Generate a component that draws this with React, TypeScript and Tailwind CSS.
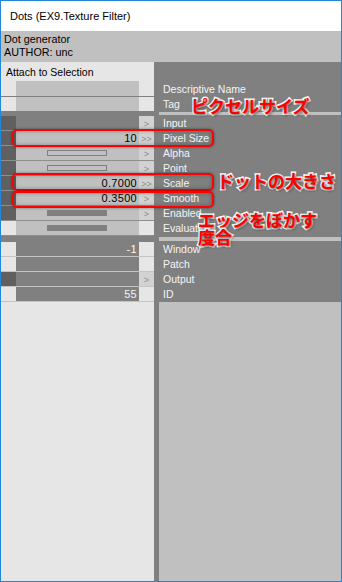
import React from 'react';

type Row = {
  label: string;
  leftDark?: boolean;
  midDark?: boolean;
  value?: string;
  valueColor?: string;
  bar?: 'hollow' | 'solid';
  arrow?: string;
  arrowBg?: string;
};

const mainRows: Row[] = [
  { label: 'Input', leftDark: true, midDark: true, arrow: '>' },
  { label: 'Pixel Size', leftDark: true, value: '10', arrow: '>>' },
  { label: 'Alpha', leftDark: true, bar: 'hollow', arrow: '>' },
  { label: 'Point', leftDark: true, bar: 'hollow', arrow: '>' },
  { label: 'Scale', leftDark: true, value: '0.7000', arrow: '>>' },
  { label: 'Smooth', leftDark: true, value: '0.3500', arrow: '>' },
  { label: 'Enabled', leftDark: true, bar: 'solid', arrow: '>' },
  { label: 'Evaluate', bar: 'solid', arrow: '', arrowBg: 'bg-[#e6e6e6]' },
];

const outRows: Row[] = [
  { label: 'Window', midDark: true, value: '-1', valueColor: 'text-[#ffffd8]' },
  { label: 'Patch', midDark: true },
  { label: 'Output', leftDark: true, midDark: true, arrow: '>' },
  { label: 'ID', midDark: true, value: '55', valueColor: 'text-[#f4f4f4]' },
];

const PinRow = ({ row, line }: { row: Row; line: string }) => (
  <div className="flex h-[15px]">
    <div className={`w-[15px] border-b ${line} ${row.leftDark ? 'bg-[#606060]' : 'bg-[#e6e6e6]'}`} />
    <div
      className={`w-[123px] border-b ${line} flex items-center justify-end pr-[2px] ${
        row.midDark ? 'bg-[#808080]' : 'bg-[#c0c0c0]'
      }`}
    >
      {row.bar && (
        <div
          className={`mx-auto h-[6px] w-[60px] ${
            row.bar === 'hollow' ? 'border border-[#808080]' : 'bg-[#808080]'
          }`}
        />
      )}
      {row.value && (
        <span className={`text-[11px] leading-none tracking-[0.3px] ${row.valueColor ?? 'text-black'}`}>{row.value}</span>
      )}
    </div>
    <div
      className={`w-[15px] border-b ${line} flex items-center justify-center pt-[2px] text-[9px] leading-none text-[#8c8c8c] ${
        row.arrowBg ?? (row.arrow ? 'bg-[#d2d2d2]' : 'bg-[#e6e6e6]')
      }`}
    >
      {row.arrow}
    </div>
    <div className="w-[5px] bg-[#808080]" />
    <div className="flex-1 bg-[#808080] pl-[4px] flex items-center text-[10.5px] leading-none text-[#f4f4f4]">
      {row.label}
    </div>
  </div>
);

const redBox =
  'absolute left-[11px] w-[202px] rounded-[5px] border-2 border-[#ff0000] shadow-[0_0_3px_rgba(0,0,0,0.45),inset_0_0_4px_rgba(0,0,0,0.3)]';

const note =
  "absolute text-[17px] font-bold leading-none text-[#ff0000] whitespace-nowrap [-webkit-text-stroke:3px_white] [paint-order:stroke_fill] [text-shadow:1px_1px_3px_rgba(0,0,0,0.8)] [font-family:'Noto_Sans_CJK_JP',sans-serif]";

export default function App() {
  return (
    <div className="relative w-[342px] h-[582px] border border-[#2386d8] flex flex-col overflow-hidden bg-[#e6e6e6] font-['Liberation_Sans',Arial,sans-serif] text-black">
      {/* title bar */}
      <div className="h-[30px] bg-white flex items-center pl-[9px] text-[11px]">Dots (EX9.Texture Filter)</div>

      {/* node info */}
      <div className="h-[31px] bg-[#c0c0c0] pl-[3px] pt-[2px] text-[10.8px] leading-[13px]">
        <div>Dot generator</div>
        <div>AUTHOR: unc</div>
      </div>

      <div className="flex h-[19px]">
        <div className="w-[153px] bg-[#e6e6e6] pl-[5px] pt-[5px] text-[10.5px] leading-none">Attach to Selection</div>
        <div className="flex-1 bg-[#808080]" />
      </div>

      {/* config pins */}
      <div className="flex h-[16px]">
        <div className="w-[15px] bg-[#e6e6e6] border-b border-[#808080]" />
        <div className="w-[123px] bg-[#c0c0c0] border-b border-[#808080]" />
        <div className="w-[15px] bg-[#e6e6e6] border-b border-[#808080]" />
        <div className="flex-1 bg-[#808080] pl-[9px] flex items-center text-[10.5px] leading-none text-[#f4f4f4]">
          Descriptive Name
        </div>
      </div>
      <div className="flex h-[14px]">
        <div className="w-[15px] bg-[#e6e6e6]" />
        <div className="w-[123px] bg-[#c0c0c0]" />
        <div className="w-[15px] bg-[#e6e6e6]" />
        <div className="flex-1 bg-[#808080] pl-[9px] flex items-center text-[10.5px] leading-none text-[#f4f4f4]">Tag</div>
      </div>

      <div className="flex h-[5px] bg-[#808080]">
        <div className="w-[158px]" />
        <div className="flex-1 mt-[1px] h-[3px] bg-[#c0c0c0]" />
      </div>

      {/* inputs */}
      {mainRows.map((r) => (
        <PinRow key={r.label} row={r} line="border-[#8e8e8e]" />
      ))}

      <div className="flex h-[6px] bg-[#808080]">
        <div className="w-[158px]" />
        <div className="flex-1 mt-[1px] h-[4px] bg-[#c0c0c0]" />
      </div>

      {/* outputs */}
      {outRows.map((r) => (
        <PinRow key={r.label} row={r} line="border-[#c4c4c4]" />
      ))}

      <div className="flex flex-1">
        <div className="w-[153px] bg-[#e6e6e6]" />
        <div className="w-[5px] bg-[#808080]" />
        <div className="flex-1 bg-[#c0c0c0]" />
      </div>

      {/* annotations */}
      <div className={`${redBox} top-[128px] h-[18px]`} />
      <div className={`${redBox} top-[172px] h-[18px]`} />
      <div className={`${redBox} top-[190px] h-[17px]`} />

      <div className={`${note} left-[190px] top-[96px]`}>ピクセルサイズ</div>
      <div className={`${note} left-[216px] top-[171px]`}>ドットの大きさ</div>
      <div className={`${note} left-[197px] top-[210px] leading-[22px]`}>
        エッジをぼかす
        <br />
        度合
      </div>
    </div>
  );
}
